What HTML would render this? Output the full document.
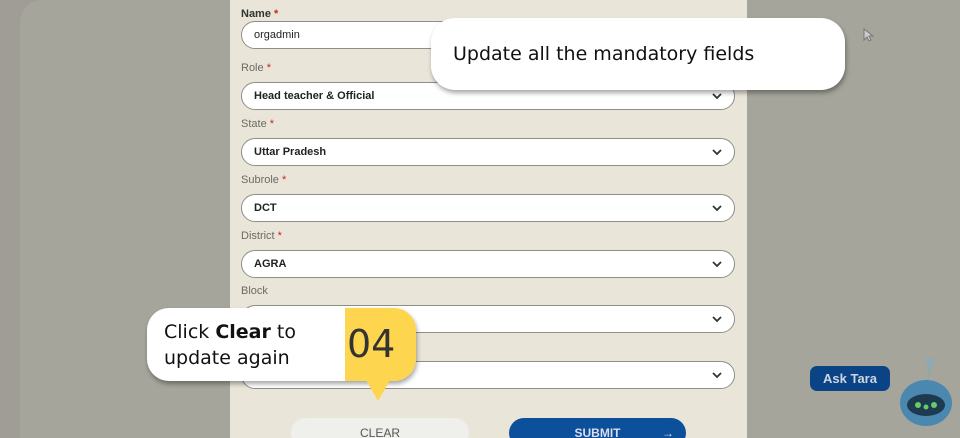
<!DOCTYPE html><html style="overflow:hidden"><head><style>
html,body{margin:0;width:960px;height:438px;overflow:hidden}
body{background:#9f9d96;font-family:"Liberation Sans",sans-serif;position:relative}
.card{position:absolute;left:20px;top:0;width:940px;height:438px;background:#a5a59c;border-radius:22px 0 0 0}
.panel{position:absolute;left:230px;top:0;width:517px;height:438px;background:#e9e6d9}
.lbl{position:absolute;left:241px;font-size:11px;color:#6b6a62}
.lbl b{color:#c22;font-weight:normal}
.f{position:absolute;left:241px;width:494px;height:28px;border:1px solid #8f8e87;border-radius:14px;background:#fff;font-size:11px;color:#222;font-weight:bold;line-height:26px;padding-left:12px;box-sizing:border-box}
.f svg{position:absolute;right:12px;top:10px}
.btn{position:absolute;top:418px;height:30px;border-radius:15px;font-size:12px;text-align:center;line-height:30px}
.tip{position:absolute;background:#fff;box-shadow:1px 3px 5px rgba(0,0,0,.35);font-family:"DejaVu Sans",sans-serif}
</style></head><body>
<div class="card"></div>
<div class="panel"></div>
<div class="lbl" style="top:8px;color:#333;font-weight:bold">Name <b style="font-weight:bold">*</b></div>
<div class="f" style="top:21px;font-weight:normal">orgadmin</div>
<div class="lbl" style="top:62px">Role <b>*</b></div>
<div class="f" style="top:82px">Head teacher &amp; Official<svg width="10" height="7"><path d="M1 1l4 4 4-4" stroke="#333" stroke-width="1.8" fill="none"/></svg></div>
<div class="lbl" style="top:118px">State <b>*</b></div>
<div class="f" style="top:138px">Uttar Pradesh<svg width="10" height="7"><path d="M1 1l4 4 4-4" stroke="#333" stroke-width="1.8" fill="none"/></svg></div>
<div class="lbl" style="top:174px">Subrole <b>*</b></div>
<div class="f" style="top:194px">DCT<svg width="10" height="7"><path d="M1 1l4 4 4-4" stroke="#333" stroke-width="1.8" fill="none"/></svg></div>
<div class="lbl" style="top:230px">District <b>*</b></div>
<div class="f" style="top:250px">AGRA<svg width="10" height="7"><path d="M1 1l4 4 4-4" stroke="#333" stroke-width="1.8" fill="none"/></svg></div>
<div class="lbl" style="top:285px">Block</div>
<div class="f" style="top:305px"><svg width="10" height="7"><path d="M1 1l4 4 4-4" stroke="#333" stroke-width="1.8" fill="none"/></svg></div>
<div class="f" style="top:361px"><svg width="10" height="7"><path d="M1 1l4 4 4-4" stroke="#333" stroke-width="1.8" fill="none"/></svg></div>
<div class="btn" style="left:291px;width:178px;background:#efefec;color:#555">CLEAR</div>
<div class="btn" style="left:509px;width:177px;background:#0c4f9a;color:#dde;font-weight:bold">SUBMIT<span style="position:absolute;right:12px;font-weight:normal">→</span></div>
<div class="tip" style="left:431px;top:18px;width:414px;height:72px;border-radius:24px;font-size:19px;line-height:72px;padding-left:22px;box-sizing:border-box;color:#111">Update all the mandatory fields</div>
<svg style="position:absolute;left:863px;top:28px" width="12" height="16"><path d="M1 1v11l3-3 2 4 2-1-2-4h4z" fill="#ccc" stroke="#777"/></svg>
<div class="tip" style="left:147px;top:308px;width:269px;height:73px;border-radius:22px;overflow:hidden">
<div style="position:absolute;left:17px;top:11px;font-size:19px;line-height:26px;color:#111">Click <b>Clear</b> to<br>update again</div>
<div style="position:absolute;left:198px;top:0;width:71px;height:73px;background:#fdd54e;font-size:38px;color:#333;line-height:73px;text-indent:2px">04</div></div>
<svg style="position:absolute;left:366px;top:380px" width="24" height="22"><path d="M0 0h24L12 21z" fill="#fdd54e"/></svg>
<div style="position:absolute;left:810px;top:366px;width:80px;height:25px;background:#0b4486;border-radius:7px;color:#cfd5e0;font-weight:bold;font-size:13px;line-height:25px;text-align:center">Ask Tara</div>
<svg style="position:absolute;left:890px;top:355px" width="65" height="80"><line x1="40" y1="8" x2="37" y2="28" stroke="#8aa" stroke-width="2"/><circle cx="40" cy="7" r="4" fill="#8ab"/><ellipse cx="36" cy="48" rx="26" ry="23" fill="#4a88b0"/><ellipse cx="36" cy="50" rx="19" ry="11" fill="#1d3a50"/><circle cx="28" cy="50" r="3" fill="#6c6"/><circle cx="36" cy="52" r="2.5" fill="#6c6"/><circle cx="44" cy="50" r="3" fill="#6c6"/></svg>
</body></html>
